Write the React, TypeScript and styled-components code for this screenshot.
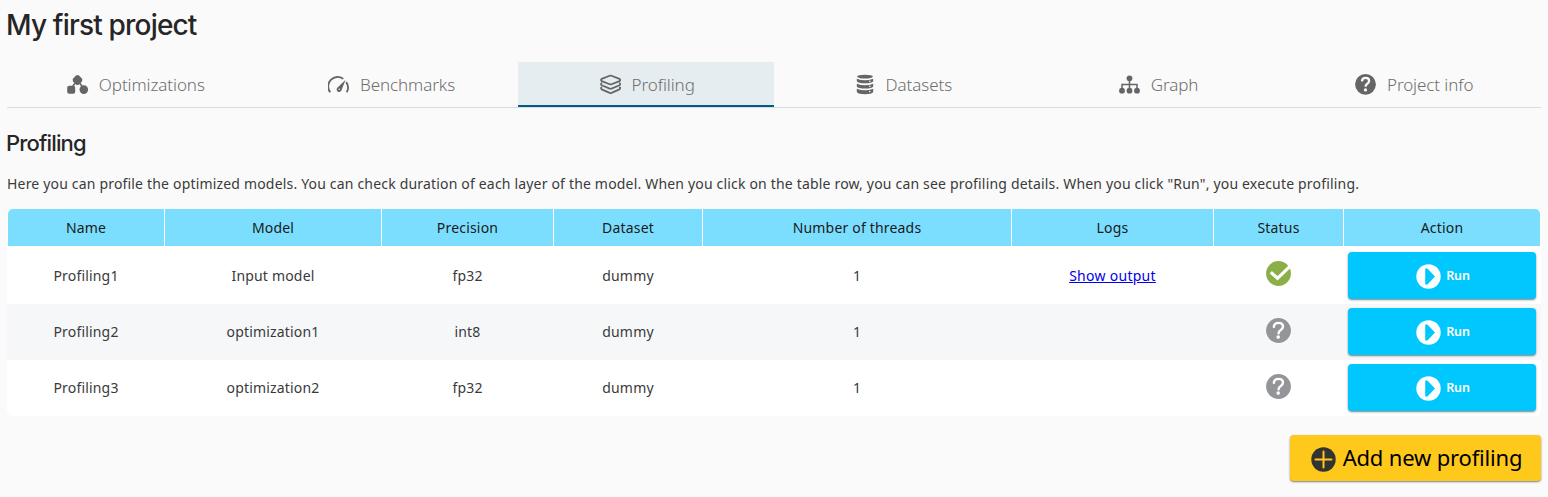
import React from "react";
import styled, { createGlobalStyle } from "styled-components";

const Global = createGlobalStyle`
  *, *::before, *::after { box-sizing: border-box; }
  body {
    margin: 0;
    background: #fafafa;
    color: #3a3a3a;
    font-family: "Noto Sans", "Liberation Sans", sans-serif;
    font-size: 14px;
    letter-spacing: 0.18px;
  }
`;

const Page = styled.main`
  height: 497px;
  padding: 0 7px;
  display: flex;
  flex-direction: column;
`;

const Title = styled.h1`
  margin: 0 0 0 -1px;
  height: 62px;
  padding-top: 7px;
  font: 500 28px/36px Inter, sans-serif;
  letter-spacing: -0.82px;
  color: #262626;
`;

const Tabs = styled.nav`
  display: flex;
  height: 46px;
  border-bottom: 1px solid #dcdcdc;
`;

const Tab = styled.a<{ $active?: boolean }>`
  flex: 1;
  display: flex;
  align-items: center;
  justify-content: center;
  gap: 10px;
  padding-left: 2px;
  font-size: 17px;
  font-weight: 300;
  letter-spacing: -0.08px;
  color: #6e6e6e;
  background: ${(p) => (p.$active ? "#e5edf0" : "transparent")};
  box-shadow: ${(p) => (p.$active ? "inset 0 -2px #005b85" : "none")};
`;

const TabIcon = styled.svg`
  width: 22px;
  height: 22px;
  margin-bottom: 1px;
  color: #656565;
`;

const Heading = styled.h2`
  margin: 0 0 0 -1px;
  height: 63px;
  padding-top: 20px;
  font: 500 22px/30px Inter, sans-serif;
  letter-spacing: -0.85px;
  color: #262626;
`;

const Intro = styled.p`
  margin: 0;
  height: 38px;
  padding-top: 3px;
  line-height: 20px;
  white-space: nowrap;
`;

const Table = styled.div`
  flex: none;
  background: #fff;
  border-radius: 6px;
`;

const Row = styled.div<{ $alt?: boolean }>`
  display: grid;
  grid-template-columns: 156fr 216fr 171fr 148fr 308fr 201fr 129fr 196fr;
  column-gap: 1px;
  padding: 0 1px 1px;
  height: 56px;
  align-items: center;
  background: ${(p) => (p.$alt ? "#f6f7f9" : "transparent")};
`;

const HeadRow = styled(Row)`
  height: 39px;
  padding-bottom: 2px;
  align-items: stretch;
  color: #1a1a1a;
`;

const HeadCell = styled.div`
  display: flex;
  align-items: center;
  justify-content: center;
  background: #7bdeff;
  &:first-child { border-top-left-radius: 5px; }
  &:last-child { border-top-right-radius: 5px; }
`;

const Cell = styled.div`
  display: flex;
  align-items: center;
  justify-content: center;
`;

const LogLink = styled.a`
  color: #0000ee;
  letter-spacing: 0.28px;
  text-decoration: underline;
`;

const StatusIcon = styled.svg<{ $lift: number }>`
  width: 25px;
  height: 25px;
  margin-bottom: ${(p) => p.$lift}px;
`;

const RunButton = styled.button`
  width: 188px;
  height: 47px;
  padding: 1px 0 0 2px;
  border: 0;
  border-radius: 4px;
  display: flex;
  align-items: center;
  justify-content: center;
  gap: 5px;
  background: #00c7fd;
  color: #fff;
  font: 600 12.5px/16px "Noto Sans", sans-serif;
  letter-spacing: -0.1px;
  box-shadow: 0 1px 2px rgba(0, 0, 0, 0.5);
`;

const ButtonIcon = styled.svg`
  width: 25px;
  height: 25px;
  margin-top: 1px;
`;

const AddButton = styled.button`
  align-self: flex-end;
  width: 251px;
  height: 46px;
  margin-top: 19px;
  padding: 0 0 2px 2px;
  border: 0;
  border-radius: 4px;
  display: flex;
  align-items: center;
  justify-content: center;
  gap: 7px;
  background: #fec91b;
  color: #000;
  font: 400 22px/30px "Noto Sans", sans-serif;
  letter-spacing: -0.17px;
  box-shadow: 0 1px 2px rgba(0, 0, 0, 0.5);
`;

const AddIcon = styled(ButtonIcon)`
  margin-top: 5px;
`;

const icons: Record<string, React.ReactNode> = {
  Optimizations: (
    <g fill="currentColor">
      <path d="M10.500 7 4.500 15M10.500 7l6.500 9" stroke="currentColor" strokeWidth="1.600" />
      <path d="M9 2.600q1.500-1 3 0l2.900 2.800q1 1.500 0 3L12 11.400q-1.500 1-3 0L6.100 8.400q-1-1.500 0-3z" />
      <rect x="0.200" y="12.800" width="8" height="8" rx="2" />
      <circle cx="16.800" cy="16.600" r="4.300" />
    </g>
  ),
  Benchmarks: (
    <g fill="none" stroke="currentColor" strokeWidth="1.800">
      <path d="M2.300 19.300A9.400 9.400 0 0 1 15.300 5.900M18.200 9.100A9.400 9.400 0 0 1 18.700 19.300" />
      <path d="M17.600 6.800 13.500 17.300a2.500 2.500 0 1 1-4.200-2.500z" fill="currentColor" stroke="none" />
      <circle cx="11.300" cy="16.300" r="0.700" fill="#fafafa" stroke="none" />
    </g>
  ),
  Profiling: (
    <g fill="none" stroke="currentColor" strokeWidth="1.700" strokeLinejoin="round" strokeLinecap="round">
      <path d="M9.700 2.700q.9-.3 1.800 0l8 3.200q1.500 1.100 0 2.200l-8 3.200q-.9.300-1.800 0l-8-3.200q-1.500-1.100 0-2.200z" />
      <path d="M1.400 10.200q-.9 1.100.3 2l8 3.400q.9.300 1.800 0l8-3.400q1.200-.9.300-2" />
      <path d="M1.400 14.400q-.9 1.100.3 2l8 3.500q.9.300 1.800 0l8-3.500q1.200-.9.300-2" />
    </g>
  ),
  Datasets: (
    <g fill="currentColor">
      <ellipse cx="11" cy="3.600" rx="7.900" ry="1.900" />
      <path d="M2.800 5.700q8.200 3 16.400 0v2.600q-1.500 2-8.200 2T2.800 8.300z" />
      <path d="M2.800 10.700q8.200 3 16.400 0v2.700q-1.500 2-8.200 2t-8.200-2z" />
      <path d="M2.800 15.800q8.200 3 16.400 0v3.200q-1.500 2.200-8.200 2.200t-8.200-2.200z" />
      <g fill="#fafafa">
        <circle cx="15.800" cy="8.300" r=".8" />
        <circle cx="15.800" cy="13.300" r=".8" />
        <circle cx="15.800" cy="18.500" r=".8" />
      </g>
    </g>
  ),
  Graph: (
    <g fill="currentColor">
      <path d="M10.500 6v11M3 17v-5.500h15V17" fill="none" stroke="currentColor" strokeWidth="1.500" />
      <circle cx="10.500" cy="5.300" r="2.900" />
      <circle cx="3" cy="17.700" r="2.900" />
      <circle cx="10.500" cy="17.700" r="2.900" />
      <circle cx="18" cy="17.700" r="2.900" />
    </g>
  ),
  "Project info": (
    <>
      <circle cx="10.500" cy="11.300" r="10.400" fill="currentColor" />
      <path d="M6.900 8.300q.3-3.400 3.700-3.400 3.500 0 3.500 3 0 1.700-1.900 2.900-1.600 1-1.600 3" fill="none" stroke="#fafafa" strokeWidth="2.300" />
      <circle cx="10.500" cy="16.900" r="1.600" fill="#fafafa" />
    </>
  ),
};

const DoneIcon = () => (
  <StatusIcon $lift={5} viewBox="0 0 25 25">
    <circle cx="12.500" cy="12.500" r="12.400" fill="#8bae46" />
    <path d="M4.800 11.300 11.500 17.300 25 4.300" fill="none" stroke="#fff" strokeWidth="3.200" />
  </StatusIcon>
);

const UnknownIcon = () => (
  <StatusIcon $lift={3} viewBox="0 0 25 25">
    <circle cx="12.500" cy="12.500" r="12.400" fill="#949598" />
    <path d="M7.900 8.800q.3-3.900 4.700-3.900 4.400 0 4.400 3.700 0 2-2.200 3.500-2.200 1.400-2.200 3.100" fill="none" stroke="#fff" strokeWidth="2.400" strokeLinecap="round" />
    <circle cx="12.200" cy="19.100" r="1.800" fill="#fff" />
  </StatusIcon>
);

const columns = ["Name", "Model", "Precision", "Dataset", "Number of threads", "Logs", "Status", "Action"];

const rows = [
  { name: "Profiling1", model: "Input model", precision: "fp32", done: true },
  { name: "Profiling2", model: "optimization1", precision: "int8", done: false },
  { name: "Profiling3", model: "optimization2", precision: "fp32", done: false },
];

export default function App() {
  return (
    <>
      <Global />
      <Page>
        <Title>My first project</Title>
        <Tabs>
          {Object.entries(icons).map(([label, icon]) => (
            <Tab key={label} $active={label === "Profiling"}>
              <TabIcon viewBox="0 0 22 22">{icon}</TabIcon>
              {label}
            </Tab>
          ))}
        </Tabs>
        <Heading>Profiling</Heading>
        <Intro>
          Here you can profile the optimized models. You can check duration of each layer of the model. When you click
          on the table row, you can see profiling details. When you click "Run", you execute profiling.
        </Intro>
        <Table>
          <HeadRow>
            {columns.map((c) => (
              <HeadCell key={c}>{c}</HeadCell>
            ))}
          </HeadRow>
          {rows.map((r, i) => (
            <Row key={r.name} $alt={i % 2 === 1}>
              <Cell>{r.name}</Cell>
              <Cell>{r.model}</Cell>
              <Cell>{r.precision}</Cell>
              <Cell>dummy</Cell>
              <Cell>1</Cell>
              <Cell>{r.done && <LogLink>Show output</LogLink>}</Cell>
              <Cell>{r.done ? <DoneIcon /> : <UnknownIcon />}</Cell>
              <Cell>
                <RunButton>
                  <ButtonIcon viewBox="0 0 25 25">
                    <circle cx="12.500" cy="12.500" r="12.200" fill="#fff" />
                    <path d="M9.200 4.400h2.200l7.600 8.100-7.600 8.100H9.200z" fill="#00c7fd" />
                  </ButtonIcon>
                  Run
                </RunButton>
              </Cell>
            </Row>
          ))}
        </Table>
        <AddButton>
          <AddIcon viewBox="0 0 25 25">
            <circle cx="12.500" cy="12.500" r="12.200" fill="#333" />
            <path d="M12.500 4.500v16M4.500 12.500h16" stroke="#fec91b" strokeWidth="2" strokeLinecap="round" />
          </AddIcon>
          Add new profiling
        </AddButton>
      </Page>
    </>
  );
}
